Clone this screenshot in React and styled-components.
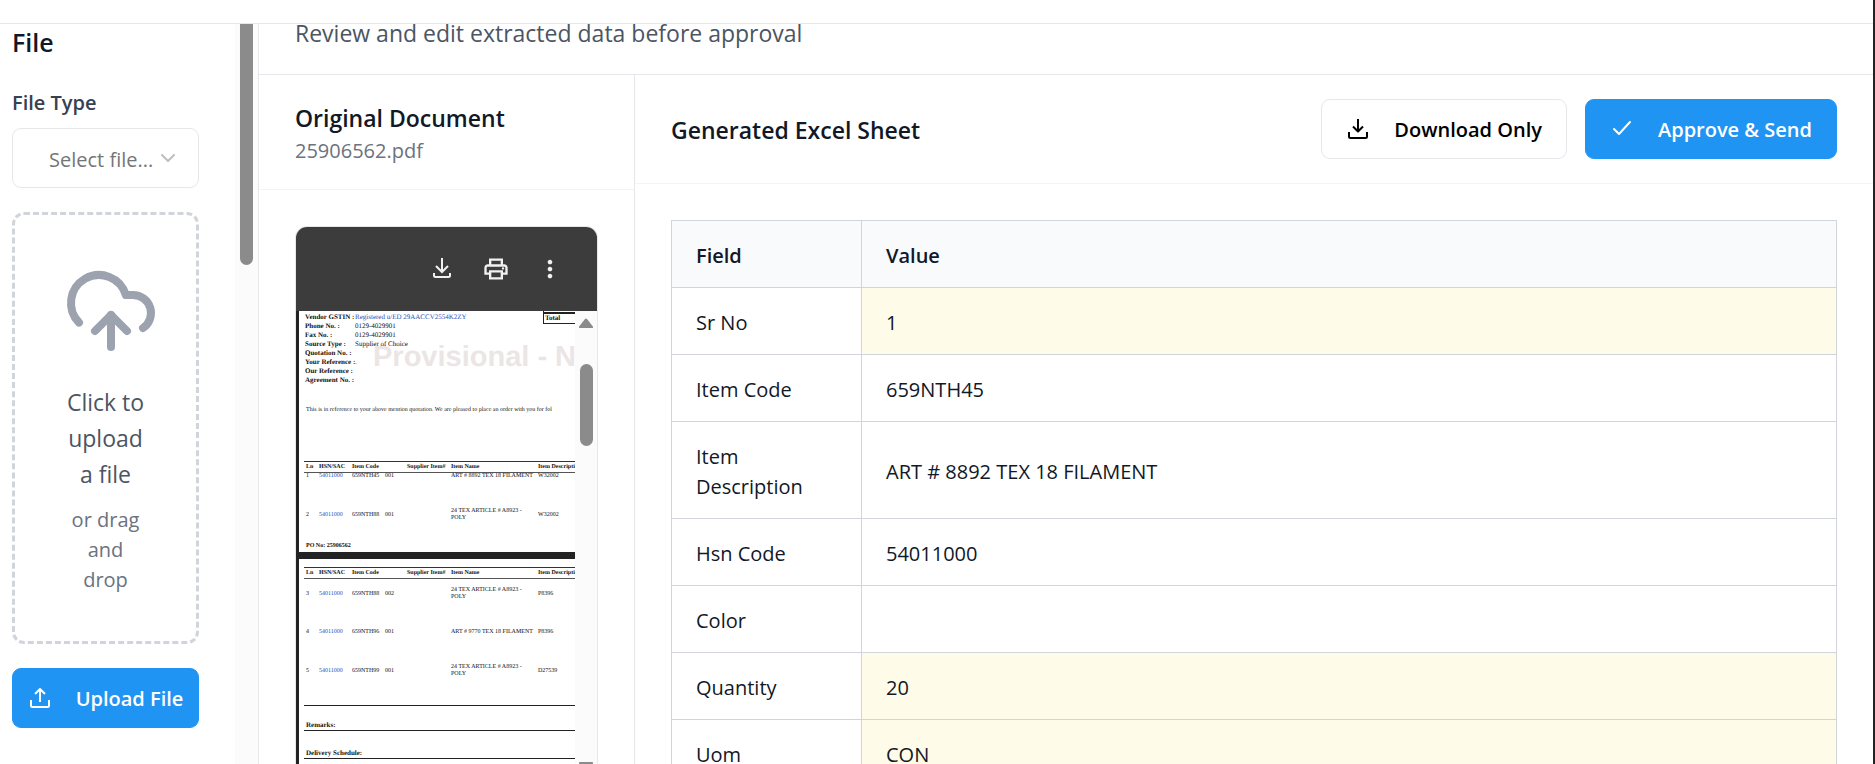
import React from "react";
import styled, { createGlobalStyle, css } from "styled-components";
import { MdOutlinePrint, MdMoreVert } from "react-icons/md";
import { CloudUpload } from "lucide-react";

const GlobalStyle = createGlobalStyle`
  *, *::before, *::after { box-sizing: border-box; }
  body {
    margin: 0;
    background: #fff;
    color: #111827;
    font-family: "Open Sans", "Noto Sans", sans-serif;
    font-size: 20px;
    line-height: 30px;
  }
  h2, h3, p { margin: 0; }
  button, select { font: inherit; }
`;

const Shell = styled.div`
  display: flex;
  flex-direction: column;
  height: 100vh;
  overflow: hidden;
  border-right: 2px solid #232323;
`;

const TopBar = styled.header`
  flex: 0 0 24px;
  border-bottom: 1px solid #e5e7eb;
`;

const Body = styled.div`
  flex: 1;
  min-height: 0;
  display: grid;
  grid-template-columns: 259px minmax(0, 1fr);
`;

const Sidebar = styled.aside`
  display: flex;
  justify-content: space-between;
  border-right: 1px solid #e5e7eb;
  overflow: hidden;
`;

const SidebarContent = styled.div`
  width: 199px;
  padding-left: 12px;
`;

const SidebarTitle = styled.h2`
  font-size: 25px;
  line-height: 36px;
  font-weight: 600;
  margin-bottom: 28px;
`;

const FieldLabel = styled.label`
  display: block;
  color: #374151;
  font-weight: 600;
  margin-bottom: 10px;
`;

const SelectBox = styled.div`
  display: grid;
  align-items: center;
  margin-bottom: 24px;
  & > * { grid-area: 1 / 1; }
  svg { justify-self: end; margin-right: 24px; pointer-events: none; }
`;

const Select = styled.select`
  appearance: none;
  width: 100%;
  height: 60px;
  padding: 3px 36px 0;
  border: 1px solid #e5e7eb;
  border-radius: 9px;
  background: #fff;
  color: #757575;
`;

const DropZone = styled.div`
  padding: 48px 48px 46px;
  margin-bottom: 24px;
  border: 3px dashed #d1d5db;
  border-radius: 12px;
  text-align: center;
  svg { display: block; margin-bottom: 25px; color: #9ca3af; }
`;

const DropTitle = styled.p`
  font-size: 23px;
  line-height: 36px;
  color: #4b5563;
  margin-bottom: 13px;
`;

const Muted = styled.p`
  color: #6b7280;
`;

const FileName = styled(Muted)`
  padding-top: 2px;
  line-height: 28px;
`;

const Button = styled.button`
  display: flex;
  align-items: center;
  justify-content: center;
  gap: 24px;
  height: 60px;
  padding: 2px 24px 0;
  border: 1px solid #e5e7eb;
  border-radius: 9px;
  background: #fff;
  color: #000;
  font-weight: 600;
  white-space: nowrap;
  svg { flex: none; }
  ${(p) => p.$primary && css`
    background: #2094f3;
    border-color: #2094f3;
    color: #fff;
  `}
  ${(p) => p.$block && css`
    width: 100%;
    padding: 2px 0 0;
  `}
`;

const ScrollTrack = styled.div`
  flex: none;
  display: flex;
  flex-direction: column;
  align-items: center;
  width: ${(p) => p.$width}px;
  background: #fbfbfb;
`;

const ScrollThumb = styled.div`
  width: 13px;
  height: ${(p) => p.$height}px;
  background: #8b8b8b;
  border-radius: ${(p) => (p.$cut ? "0 0 7px 7px" : "7px")};
`;

const Main = styled.main`
  display: flex;
  flex-direction: column;
  min-height: 0;
`;

const Intro = styled.div`
  flex: none;
  padding: 0 36px 32px;
  border-bottom: 1px solid #e5e7eb;
  color: #4b5563;
  font-size: 23px;
  line-height: 18px;
`;

const Panels = styled.div`
  flex: 1;
  min-height: 0;
  display: grid;
  grid-template-columns: 376px minmax(0, 1fr);
`;

const Panel = styled.section`
  display: flex;
  flex-direction: column;
  min-height: 0;
  overflow: hidden;
  border-right: ${(p) => (p.$divided ? "1px solid #e5e7eb" : "none")};
`;

const PanelHeader = styled.div`
  flex: none;
  display: flex;
  align-items: center;
  justify-content: space-between;
  padding: 24px 36px;
  border-bottom: 1px solid #f3f4f6;
`;

const PanelTitle = styled.h3`
  padding-top: 2px;
  font-size: 23px;
  line-height: 34px;
  font-weight: 600;
`;

const Actions = styled.div`
  display: flex;
  gap: 18px;
`;

const PanelBody = styled.div`
  flex: 1;
  min-height: 0;
  padding: 36px 36px 0;
  display: flex;
  flex-direction: column;
`;

const Viewer = styled.div`
  flex: 1;
  min-height: 0;
  display: flex;
  flex-direction: column;
  border: 1px solid #e5e7eb;
  border-bottom: none;
  border-radius: 12px 12px 0 0;
  overflow: hidden;
`;

const ViewerBar = styled.div`
  flex: 0 0 84px;
  display: flex;
  align-items: center;
  justify-content: flex-end;
  gap: 18px;
  padding-right: 29px;
  background: #3c3c3c;
`;

const IconButton = styled.button`
  display: grid;
  place-items: center;
  width: 36px;
  height: 36px;
  padding: 0;
  border: 0;
  background: none;
  color: #f1f1f1;
`;

const ViewerBody = styled.div`
  flex: 1;
  min-height: 0;
  display: flex;
  background: #232323;
  padding-left: 3px;
`;

const Pages = styled.div`
  flex: 1;
  min-width: 0;
  display: flex;
  flex-direction: column;
  gap: 7px;
  overflow: hidden;
  font-family: "Liberation Serif", serif;
  font-size: 7px;
  line-height: 9px;
  color: #111;
  text-rendering: geometricPrecision;
`;

const Page = styled.div`
  position: relative;
  flex: none;
  height: ${(p) => p.$height}px;
  padding: ${(p) => p.$top}px 0 0 5px;
  background: #fff;
  white-space: nowrap;
  overflow: hidden;
`;

const Watermark = styled.div`
  position: absolute;
  left: 74px;
  top: 28px;
  font: bold 29px/36px "Liberation Sans", sans-serif;
  color: #ece5e6;
`;

const Heading = styled.div`
  position: relative;
  display: flex;
  justify-content: space-between;
  align-items: flex-start;
`;

const Facts = styled.dl`
  display: grid;
  grid-template-columns: 50px auto;
  margin: 0;
  padding: 2px 0 0 1px;
  dt { font-weight: bold; }
  dd { margin: 0; min-height: 9px; }
`;

const TotalBox = styled.div`
  width: 32px;
  height: 13px;
  padding-left: 1px;
  border: solid #222;
  border-width: 0 0 1px 1px;
  font-weight: bold;
  &::before {
    content: "";
    display: block;
    height: 3px;
    margin-left: -1px;
    border-bottom: 2px solid #222;
  }
`;

const Sentence = styled.div`
  padding: 21px 0 46px 2px;
  font-size: 6px;
`;

const Lines = styled.table`
  table-layout: fixed;
  width: 292px;
  border-collapse: collapse;
  font-size: 6px;
  line-height: 7px;
  th {
    padding: 0 0 0 2px;
    height: 11px;
    border-top: 1px solid #333;
    border-bottom: 1px solid #555;
    text-align: left;
  }
  td:nth-child(2) { color: #2b50b8; }
`;

const LineRow = styled.tr`
  td { padding: ${(p) => p.$gap}px 0 0 2px; }
`;

const PoNumber = styled.div`
  padding: 20px 0 0 2px;
  font-size: 6px;
  font-weight: bold;
`;

const Section = styled.div`
  padding: ${(p) => p.$space}px 0 0 2px;
  border-bottom: 1px solid #222;
  font-weight: bold;
`;

const DataTable = styled.table`
  width: 100%;
  border-collapse: collapse;
  text-align: left;
  th, td {
    padding: 20px 24px 16px;
    border: 1px solid #d1d5db;
    font-weight: 400;
  }
  thead th { background: #f9fafb; font-weight: 600; }
  th:first-child { width: 190px; }
  td { height: 67px; }
`;

const ValueCell = styled.td`
  background: ${(p) => (p.$flagged ? "#fefce8" : "#fff")};
`;

const stroke = { fill: "none", stroke: "currentColor", strokeWidth: 2, strokeLinecap: "round", strokeLinejoin: "round" };

const DownloadIcon = () => (
  <svg width="24" height="24" viewBox="0 0 24 24" {...stroke} strokeLinecap="butt" aria-hidden="true">
    <path d="M3 14v4.500q0 1.500 1.500 1.500h15q1.500 0 1.500-1.500V14M12 1v13M7 8.500l5 5 5-5" />
  </svg>
);
const UploadIcon = () => (
  <svg width="24" height="24" viewBox="0 0 24 24" {...stroke} strokeLinecap="butt" aria-hidden="true">
    <path d="M3 13v5.500q0 1.500 1.500 1.500h15q1.500 0 1.500-1.500V13M12 15V2M7 7l5-5 5 5" />
  </svg>
);
const CheckIcon = () => (
  <svg width="24" height="24" viewBox="0 0 24 24" {...stroke} aria-hidden="true">
    <path d="M4 11l5 5L20 4" />
  </svg>
);
const ChevronIcon = () => (
  <svg width="14" height="9" viewBox="0 0 14 9" {...stroke} stroke="#bfbfbf" aria-hidden="true">
    <path d="M1 1l6 6 6-6" />
  </svg>
);
const SaveIcon = () => (
  <svg width="24" height="24" viewBox="0 0 24 24" {...stroke} strokeLinecap="butt" strokeLinejoin="miter" aria-hidden="true">
    <path d="M4 16v2.500q0 1.500 1.500 1.500h13q1.500 0 1.500-1.500V16M12 1v14M6 9l6 6 6-6" />
  </svg>
);
const ArrowGlyph = ({ down }) => (
  <svg width="14" height="10" viewBox="0 0 14 10" fill="#8b8b8b" aria-hidden="true">
    <path d={down ? "M1 0h12q2 0 .5 2L8 9q-1 1-2 0L.5 2q-1.500-2 .5-2z" : "M1 10h12q2 0 .5-2L8 1q-1-1-2 0L.5 8q-1.500 2 .5 2z"} />
  </svg>
);

const ViewerScroll = styled(ScrollTrack)`
  padding-top: 7px;
  justify-content: space-between;
  overflow: hidden;
`;
const ScrollHead = styled.div`
  display: flex;
  flex-direction: column;
  align-items: center;
  gap: 36px;
`;
const ScrollEnd = styled.div`
  flex: none;
  height: 2px;
  overflow: hidden;
  display: flex;
`;

const facts = [
  ["Vendor GSTIN :", "Registered u/ED 29AACCV2554K2ZY", true],
  ["Phone No. :", "0129-4029901"],
  ["Fax No. :", "0129-4029901"],
  ["Source Type :", "Supplier of Choice"],
  ["Quotation No. :", ""],
  ["Your Reference :", "."],
  ["Our Reference :", ""],
  ["Agreement No. :", ""],
];
const FactValue = styled.dd`
  color: ${(p) => (p.$link ? "#2b50b8" : "inherit")};
`;

const columns = [["Ln", 13], ["HSN/SAC", 33], ["Item Code", 33], ["", 22], ["Supplier Item#", 44], ["Item Name", 87], ["Item Description", 60]];
const firstPage = [
  [["1", "54011000", "659NTH45", "001", "", "ART # 8892 TEX 18 FILAMENT", "W32002"], 0],
  [["2", "54011000", "659NTH88", "001", "", "24 TEX ARTICLE # A8923 -\nPOLY", "W32002"], 28],
];
const secondPage = [
  [["3", "54011000", "659NTH88", "002", "", "24 TEX ARTICLE # A8923 -\nPOLY", "P8396"], 8],
  [["4", "54011000", "659NTH96", "001", "", "ART # 9770 TEX 18 FILAMENT", "P8396"], 28],
  [["5", "54011000", "659NTH99", "001", "", "24 TEX ARTICLE # A8923 -\nPOLY", "D27539"], 28],
];

const Preserve = styled.span`
  white-space: pre-line;
`;

function OrderLines({ rows }) {
  return (
    <Lines>
      <colgroup>{columns.map(([n, w], i) => <col key={i} width={w} />)}</colgroup>
      <thead><tr>{columns.map(([n], i) => <th key={i}>{n}</th>)}</tr></thead>
      <tbody>
        {rows.map(([cells, gap]) => (
          <LineRow key={cells[0]} $gap={gap}>
            {cells.map((c, i) => <td key={i}><Preserve>{c}</Preserve></td>)}
          </LineRow>
        ))}
      </tbody>
    </Lines>
  );
}

const fields = [
  ["Sr No", "1", true],
  ["Item Code", "659NTH45"],
  ["Item Description", "ART # 8892 TEX 18 FILAMENT"],
  ["Hsn Code", "54011000"],
  ["Color", ""],
  ["Quantity", "20", true],
  ["Uom", "CON", true],
];

export default function App() {
  return (
    <>
      <GlobalStyle />
      <Shell>
        <TopBar />
        <Body>
          <Sidebar>
            <SidebarContent>
              <SidebarTitle>File</SidebarTitle>
              <FieldLabel htmlFor="file-type">File Type</FieldLabel>
              <SelectBox>
                <Select id="file-type"><option>Select file...</option></Select>
                <ChevronIcon />
              </SelectBox>
              <DropZone>
                <CloudUpload size={96} />
                <DropTitle>Click to upload a file</DropTitle>
                <Muted>or drag and drop</Muted>
              </DropZone>
              <Button type="button" $primary $block><UploadIcon />Upload File</Button>
            </SidebarContent>
            <ScrollTrack $width={23}><ScrollThumb $height={241} $cut /></ScrollTrack>
          </Sidebar>
          <Main>
            <Intro>Review and edit extracted data before approval</Intro>
            <Panels>
              <Panel $divided>
                <PanelHeader>
                  <div>
                    <PanelTitle>Original Document</PanelTitle>
                    <FileName>25906562.pdf</FileName>
                  </div>
                </PanelHeader>
                <PanelBody>
                  <Viewer>
                    <ViewerBar>
                      <IconButton type="button" aria-label="Download"><SaveIcon /></IconButton>
                      <IconButton type="button" aria-label="Print"><MdOutlinePrint size={28} /></IconButton>
                      <IconButton type="button" aria-label="More"><MdMoreVert size={28} /></IconButton>
                    </ViewerBar>
                    <ViewerBody>
                      <Pages>
                        <Page $height={241} $top={0}>
                          <Watermark>Provisional - N</Watermark>
                          <Heading>
                            <Facts>
                              {facts.map(([k, v, link]) => (
                                <React.Fragment key={k}>
                                  <dt>{k}</dt>
                                  <FactValue $link={link}>{v}</FactValue>
                                </React.Fragment>
                              ))}
                            </Facts>
                            <TotalBox>Total</TotalBox>
                          </Heading>
                          <Sentence>This is in reference to your above mention quotation. We are pleased to place an order with you for fol</Sentence>
                          <OrderLines rows={firstPage} />
                          <PoNumber>PO No: 25906562</PoNumber>
                        </Page>
                        <Page $height={240} $top={8}>
                          <OrderLines rows={secondPage} />
                          <Section $space={27} />
                          <Section $space={15}>Remarks:</Section>
                          <Section $space={18}>Delivery Schedule:</Section>
                        </Page>
                      </Pages>
                      <ViewerScroll $width={22}>
                        <ScrollHead><ArrowGlyph /><ScrollThumb $height={82} /></ScrollHead>
                        <ScrollEnd><ArrowGlyph down /></ScrollEnd>
                      </ViewerScroll>
                    </ViewerBody>
                  </Viewer>
                </PanelBody>
              </Panel>
              <Panel>
                <PanelHeader>
                  <PanelTitle>Generated Excel Sheet</PanelTitle>
                  <Actions>
                    <Button type="button"><DownloadIcon />Download Only</Button>
                    <Button type="button" $primary><CheckIcon />Approve &amp; Send</Button>
                  </Actions>
                </PanelHeader>
                <PanelBody>
                  <DataTable>
                    <thead><tr><th scope="col">Field</th><th scope="col">Value</th></tr></thead>
                    <tbody>
                      {fields.map(([name, value, flagged]) => (
                        <tr key={name}>
                          <th scope="row">{name}</th>
                          <ValueCell $flagged={flagged}>{value}</ValueCell>
                        </tr>
                      ))}
                    </tbody>
                  </DataTable>
                </PanelBody>
              </Panel>
            </Panels>
          </Main>
        </Body>
      </Shell>
    </>
  );
}
